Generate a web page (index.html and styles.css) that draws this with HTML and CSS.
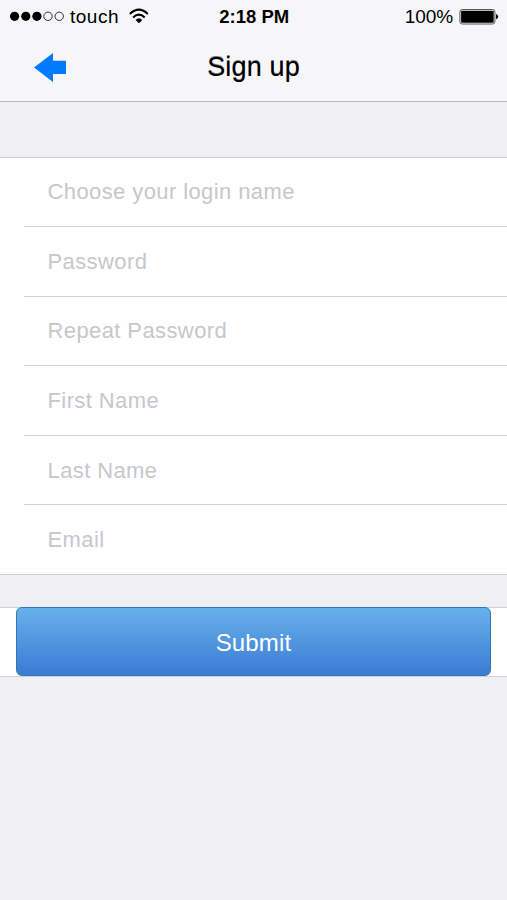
FILE: index.html
```html
<!DOCTYPE html>
<html lang="en">
<head>
<meta charset="utf-8">
<title>Sign up</title>
<link rel="stylesheet" href="styles.css">
</head>
<body>
<header class="top">
  <div class="status">
    <div class="carrier">
      <svg class="dots" width="55" height="12" viewBox="0 0 55 12">
        <circle cx="4.6" cy="5.3" r="4.6"/><circle cx="15.8" cy="5.3" r="4.6"/><circle cx="26.9" cy="5.3" r="4.6"/>
        <g fill="none" stroke="#000" stroke-width=".8"><circle cx="38" cy="5.3" r="4.2"/><circle cx="49.2" cy="5.3" r="4.2"/></g>
      </svg>
      <span class="carrier-name">touch</span>
      <svg class="wifi" width="20" height="17" viewBox="0 0 20 17">
        <g fill="none" stroke="#000" stroke-width="2.1"><path d="M.8 6Q10-2.6 18.8 6"/><path d="M4.1 9.4Q10 3.8 15.7 9.4"/></g>
        <path d="M6.5 11.9Q10 8.6 13.3 11.9L10 15.2Z"/>
      </svg>
    </div>
    <div class="time"><span>2:18 PM</span></div>
    <div class="power">
      <span class="percent">100%</span>
      <svg class="battery" width="40" height="16" viewBox="0 0 40 16">
        <rect x=".9" y=".5" width="35" height="14.5" rx="2.4" fill="#f6f6f9" stroke="#555" stroke-width="1"/>
        <rect x="2.1" y="1.7" width="32.6" height="12.1" rx="1"/>
        <path d="M37 5Q39.2 5.5 39.2 7.6T37 10.2Z"/>
      </svg>
    </div>
  </div>
  <nav class="nav">
    <svg class="back" width="33" height="30" viewBox="0 0 33 30"><path fill="#007aff" d="M0 15.5 19 1V8.7H32V22H19V30Z"/></svg>
    <h1 class="title"><span>Sign up</span></h1>
  </nav>
</header>
<main>
  <form class="form">
    <div class="fields">
      <div class="field"><span>Choose your login name</span></div>
      <div class="field"><span>Password</span></div>
      <div class="field"><span>Repeat Password</span></div>
      <div class="field"><span>First Name</span></div>
      <div class="field"><span>Last Name</span></div>
      <div class="field"><span>Email</span></div>
    </div>
    <div class="actions"><button class="submit" type="button"><span>Submit</span></button></div>
  </form>
</main>
</body>
</html>
```

FILE: styles.css
```css
* { box-sizing: border-box; }
body {
  margin: 0;
  min-height: 900px;
  background: #efeff4;
  color: #000;
  font-family: "Liberation Sans", Arial, sans-serif;
}
.top { height: 102px; background: #f6f6f9; border-bottom: 1px solid #b9b9bc; }
.status {
  display: grid;
  grid-template-columns: 1fr auto 1fr;
  align-items: center;
  height: 33px;
  padding: 0 8.5px 0 10px;
  font-size: 19px;
  line-height: 22px;
}
.carrier, .power { display: flex; align-items: center; }
.power { justify-content: flex-end; }
.carrier-name { margin: 0 10px 0 5px; letter-spacing: .5px; }
.time { font-weight: bold; font-size: 18.5px; }
.percent { margin-right: 5.5px; letter-spacing: -.1px; }
.nav { display: grid; grid-template-columns: 34px 33px 1fr 67px; align-items: center; height: 68px; }
.back { grid-column: 2; }
.title {
  margin: 0;
  text-align: center;
  font-size: 27px;
  font-weight: normal;
  line-height: 32px;
  letter-spacing: .15px;
  text-shadow: 0 -1px 0 rgba(0, 0, 0, .5);
}
.fields {
  margin-top: 55px;
  padding-left: 24px;
  background: #fff;
  border-top: 1px solid #d0d0d3;
  border-bottom: 1px solid #d0d0d3;
}
.field {
  display: flex;
  align-items: center;
  height: 69.4px;
  padding-left: 23.5px;
  border-bottom: 1px solid #d3d3d5;
  color: #c7c7cc;
  font-size: 22px;
  letter-spacing: .4px;
}
.field:nth-child(n+4) { padding-top: 2px; }
.field:last-child { border-bottom: 0; height: 69px; }
.actions {
  margin-top: 32px;
  padding: 0 16px;
  height: 70px;
  background: linear-gradient(#d0d0d3 1px, #fff 1px, #fff 69px, #d0d0d3 69px);
}
.submit {
  display: block;
  width: 100%;
  height: 69px;
  padding: 3px 0 0;
  border: 1px solid #2f78b0;
  border-radius: 6px;
  background: linear-gradient(#67b1ea, #3b7bd4);
  color: #fff;
  font: 24px "Liberation Sans", Arial, sans-serif;
  letter-spacing: .15px;
}
```
